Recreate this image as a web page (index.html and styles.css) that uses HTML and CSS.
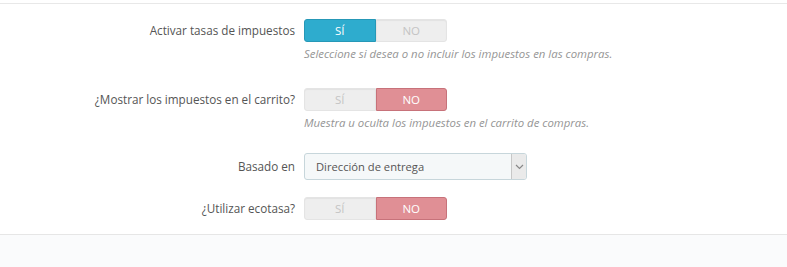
FILE: index.html
```html
<!DOCTYPE html>
<html lang="es">
<head>
<meta charset="utf-8">
<link rel="stylesheet" href="styles.css">
</head>
<body>
<div class="panel">
  <div class="form-body">
    <div class="form-group">
      <label class="control-label">Activar tasas de impuestos</label>
      <div class="control">
        <div class="switch">
          <span class="opt on-yes">SÍ</span>
          <span class="opt off">NO</span>
        </div>
        <p class="help">Seleccione si desea o no incluir los impuestos en las compras.</p>
      </div>
    </div>
    <div class="form-group g2">
      <label class="control-label">¿Mostrar los impuestos en el carrito?</label>
      <div class="control">
        <div class="switch">
          <span class="opt off">SÍ</span>
          <span class="opt on-no">NO</span>
        </div>
        <p class="help">Muestra u oculta los impuestos en el carrito de compras.</p>
      </div>
    </div>
    <div class="form-group g3">
      <label class="control-label">Basado en</label>
      <div class="control">
        <div class="select">
          <span class="select-text">Dirección de entrega</span>
          <span class="select-btn">
            <svg width="9" height="6" viewBox="0 0 9 6"><path d="M1 1 L4.5 4.5 L8 1" fill="none" stroke="#888" stroke-width="1.2"/></svg>
          </span>
        </div>
      </div>
    </div>
    <div class="form-group g4">
      <label class="control-label">¿Utilizar ecotasa?</label>
      <div class="control">
        <div class="switch">
          <span class="opt off">SÍ</span>
          <span class="opt on-no">NO</span>
        </div>
      </div>
    </div>
  </div>
  <div class="panel-footer"></div>
</div>
</body>
</html>
```
FILE: styles.css
```css
html, body {
  margin: 0;
  padding: 0;
  background: #fff;
  font-family: "Open Sans", "Liberation Sans", sans-serif;
  color: #555;
}
.panel {
  padding-top: 3px;
}
.form-body {
  border-top: 1px solid #e8e8e8;
  border-bottom: 1px solid #e6e6e6;
  padding-top: 15px;
  padding-bottom: 14px;
}
.form-group {
  display: grid;
  grid-template-columns: 295px auto;
  column-gap: 9px;
  align-items: start;
}
.g2 { margin-top: 26px; }
.g3 { margin-top: 22px; }
.g4 { margin-top: 17px; }
.control-label {
  text-align: right;
  font-size: 11.7px;
  line-height: 23px;
  color: #555;
}
.g3 .control-label { line-height: 27px; }
.control { display: flex; flex-direction: column; }
.switch {
  display: flex;
  width: 143px;
  height: 23px;
}
.opt {
  flex: 1;
  display: flex;
  align-items: center;
  justify-content: center;
  font-size: 11.5px;
  box-sizing: border-box;
}
.opt.off {
  background: #eeeeee;
  color: #c4c4c4;
  border: 1px solid #e4e4e4;
  box-shadow: inset 0 1px 1px rgba(0,0,0,0.05);
}
.switch .opt:first-child { border-radius: 3px 0 0 3px; }
.switch .opt:last-child { border-radius: 0 3px 3px 0; }
.opt.on-yes {
  background: #2eacce;
  color: #fff;
  border: 1px solid #2698b7;
}
.opt.on-no {
  background: #e08f95;
  color: #fff;
  border: 1px solid #c7727a;
}
.help {
  margin: 4px 0 0;
  font-size: 11.4px;
  line-height: 16px;
  font-style: italic;
  color: #959595;
}
.select {
  display: flex;
  width: 223px;
  height: 27px;
  box-sizing: border-box;
  border: 1px solid #c7d6db;
  border-radius: 3px;
  background: #f5f8f9;
  overflow: hidden;
}
.select-text {
  flex: 1;
  font-size: 11.2px;
  line-height: 25px;
  padding-left: 11px;
  color: #555;
}
.select-btn {
  width: 14px;
  display: flex;
  align-items: center;
  justify-content: center;
  background: #eaeaea;
  border-left: 1px solid #c7c7c7;
}
.panel-footer {
  height: 32px;
  background: #fafbfc;
}
```
